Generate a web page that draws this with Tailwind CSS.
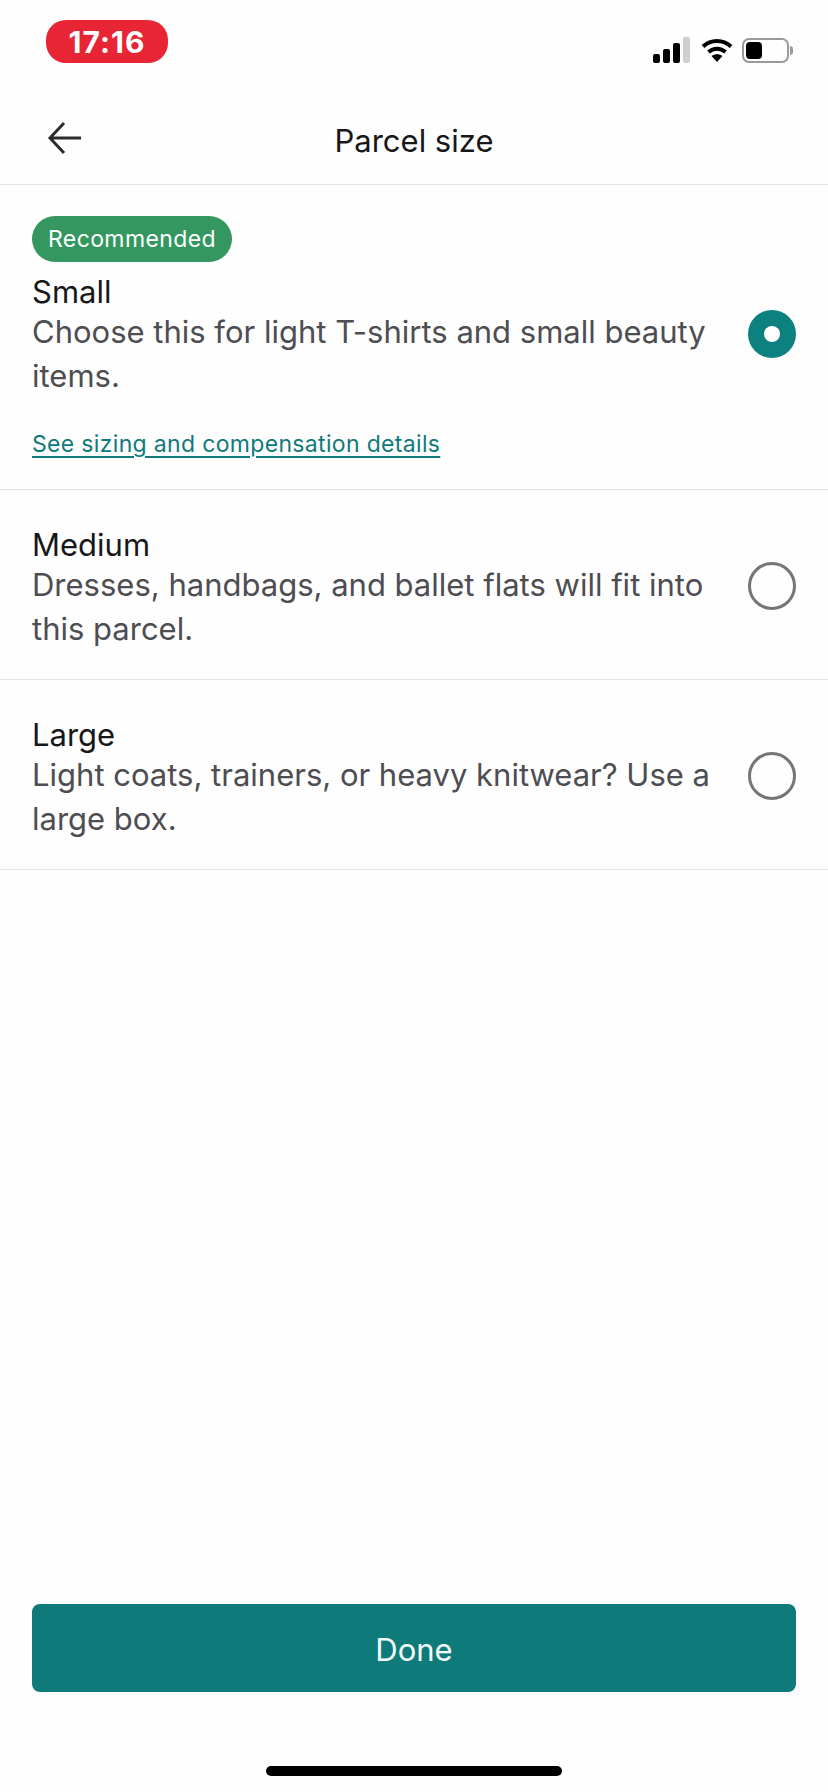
<!DOCTYPE html>
<html>
<head>
<meta charset="utf-8">
<script src="https://cdn.jsdelivr.net/npm/@tailwindcss/browser@4"></script>
</head>
<body class="m-0 bg-[#fefefe]">
<div class="w-[828px] h-[1792px] flex flex-col bg-[#fefefe] font-['Inter','Liberation_Sans',sans-serif] text-[#17171a] overflow-hidden">
  <div class="h-[96px] shrink-0 flex justify-between pl-[46px] pr-[35px]">
    <div class="mt-[20px] w-[122px] h-[43px] rounded-[20px] bg-[#e82535] text-white text-[30px] leading-[44px] font-bold tracking-[1px] text-center">17:16</div>
    <div class="mt-[36px] h-[28px] flex items-center gap-[9px]">
      <svg class="mr-[2px]" width="37" height="26" viewBox="0 0 37 26"><rect x="0" y="17" width="7" height="9" rx="2" fill="#000"/><rect x="10" y="12" width="7" height="14" rx="2" fill="#000"/><rect x="20" y="6" width="7" height="20" rx="2" fill="#000"/><rect x="30" y="0" width="7" height="26" rx="2" fill="#cfcfcf"/></svg>
      <svg width="32" height="24" viewBox="0 0 32 24"><path d="M2 8.5C10 1 22 1 30 8.5" fill="none" stroke="#000" stroke-width="4" /><path d="M7.5 14C12.5 9.5 19.5 9.5 24.5 14" fill="none" stroke="#000" stroke-width="4"/><path d="M10.5 18 L16 24 L21.5 18 C18 15.5 14 15.5 10.5 18Z" fill="#000"/></svg>
      <div class="flex items-center">
        <div class="w-[47px] h-[25px] rounded-[7px] border-2 border-[#9a9a9a] p-[2px]"><div class="w-[16px] h-full rounded-[4px] bg-black"></div></div>
        <div class="w-[3px] h-[9px] ml-[1px] rounded-r-full bg-[#9a9a9a]"></div>
      </div>
    </div>
  </div>
  <div class="relative h-[89px] shrink-0 flex items-center justify-center border-b border-[#e6e6e6]">
    <svg class="absolute left-[47px] top-[25px]" width="36" height="34" viewBox="0 0 36 34"><path d="M34 17H3M17 2 3 17l14 15" fill="none" stroke="#2c2c2e" stroke-width="3"/></svg>
    <span class="text-[31px] leading-[40px] pt-[1px]">Parcel size</span>
  </div>
  <div class="h-[305px] shrink-0 border-b border-[#e6e6e6] pl-[32px] pr-[32px] pt-[31px] flex items-start justify-between">
    <div class="w-[690px]">
      <div class="w-[200px] h-[46px] rounded-[23px] bg-[#33975f] text-white text-[23px] leading-[46px] text-center tracking-[0.4px]">Recommended</div>
      <div class="mt-[12px] text-[31px] leading-[36px]">Small</div>
      <div class="text-[31px] leading-[44px] text-[#4d4d52]">Choose this for light T-shirts and small beauty items.</div>
      <a class="block mt-[29px] text-[23px] leading-[34px] text-[#0e7a7a] underline underline-offset-[4px] tracking-[0.33px]">See sizing and compensation details</a>
    </div>
    <div class="mt-[94px] w-[48px] h-[48px] rounded-full bg-[#0d8080] flex items-center justify-center shrink-0"><div class="w-[16px] h-[16px] rounded-full bg-white"></div></div>
  </div>
  <div class="h-[190px] shrink-0 border-b border-[#e6e6e6] pl-[32px] pr-[32px] pt-[37px] flex items-start justify-between">
    <div class="w-[690px]">
      <div class="text-[31px] leading-[36px]">Medium</div>
      <div class="text-[31px] leading-[44px] text-[#4d4d52]">Dresses, handbags, and ballet flats will fit into this parcel.</div>
    </div>
    <div class="mt-[35px] w-[48px] h-[48px] rounded-full border-[3px] border-[#757575] shrink-0"></div>
  </div>
  <div class="h-[190px] shrink-0 border-b border-[#e6e6e6] pl-[32px] pr-[32px] pt-[37px] flex items-start justify-between">
    <div class="w-[690px]">
      <div class="text-[31px] leading-[36px]">Large</div>
      <div class="text-[31px] leading-[44px] text-[#4d4d52]">Light coats, trainers, or heavy knitwear? Use a large box.</div>
    </div>
    <div class="mt-[35px] w-[48px] h-[48px] rounded-full border-[3px] border-[#757575] shrink-0"></div>
  </div>
  <div class="flex-1"></div>
  <div class="mx-[32px] h-[88px] shrink-0 rounded-[8px] bg-[#0e7a7a] text-[#f2fafa] text-[31px] pt-[4px] flex items-center justify-center">Done</div>
  <div class="h-[100px] shrink-0 flex justify-center pt-[74px]"><div class="w-[296px] h-[10px] rounded-full bg-black"></div></div>
</div>
</body>
</html>
